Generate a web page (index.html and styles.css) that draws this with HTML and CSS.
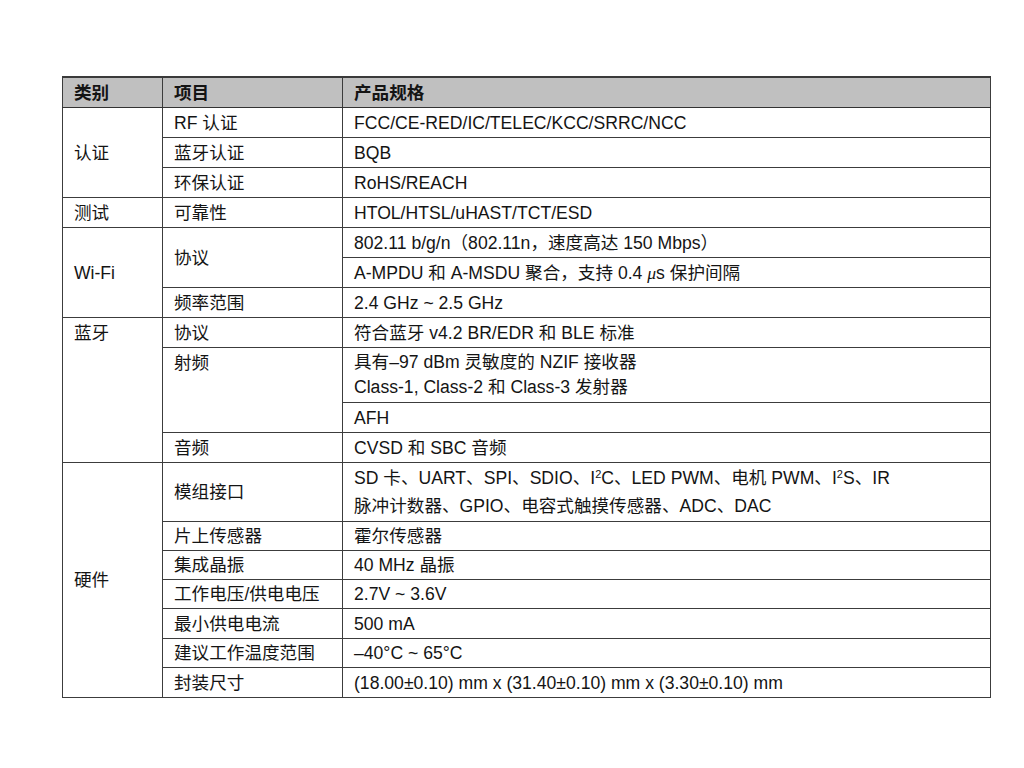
FILE: index.html
```html
<!DOCTYPE html>
<html lang="zh-CN">
<head>
<meta charset="utf-8">
<title>规格</title>
<link rel="stylesheet" href="styles.css">
</head>
<body>
<div class="page">
<table class="spec">
  <colgroup>
    <col class="c1"><col class="c2"><col class="c3">
  </colgroup>
  <thead>
    <tr class="h30"><th>类别</th><th>项目</th><th>产品规格</th></tr>
  </thead>
  <tbody>
    <tr class="h30"><td rowspan="3">认证</td><td>RF 认证</td><td>FCC/CE-RED/IC/TELEC/KCC/SRRC/NCC</td></tr>
    <tr class="h30"><td>蓝牙认证</td><td>BQB</td></tr>
    <tr class="h30"><td>环保认证</td><td>RoHS/REACH</td></tr>
    <tr class="h30 sect"><td>测试</td><td>可靠性</td><td>HTOL/HTSL/uHAST/TCT/ESD</td></tr>
    <tr class="h30 sect"><td rowspan="3">Wi-Fi</td><td rowspan="2">协议</td><td>802.11 b/g/n（802.11n，速度高达 150 Mbps）</td></tr>
    <tr class="h30"><td>A-MPDU 和 A-MSDU 聚合，支持 0.4 <i class="mu">μ</i>s 保护间隔</td></tr>
    <tr class="h30"><td>频率范围</td><td>2.4 GHz ~ 2.5 GHz</td></tr>
    <tr class="h30 sect"><td rowspan="4" class="top">蓝牙</td><td>协议</td><td>符合蓝牙 v4.2 BR/EDR 和 BLE 标准</td></tr>
    <tr class="h55"><td rowspan="2" class="top2">射频</td><td class="multi">具有–97 dBm 灵敏度的 NZIF 接收器<br>Class-1, Class-2 和 Class-3 发射器</td></tr>
    <tr class="h30"><td>AFH</td></tr>
    <tr class="h30"><td>音频</td><td>CVSD 和 SBC 音频</td></tr>
    <tr class="h59 sect"><td rowspan="7">硬件</td><td>模组接口</td><td class="multi2">SD 卡、UART、SPI、SDIO、I<sup>2</sup>C、LED PWM、电机 PWM、I<sup>2</sup>S、IR<br>脉冲计数器、GPIO、电容式触摸传感器、ADC、DAC</td></tr>
    <tr class="h29"><td>片上传感器</td><td>霍尔传感器</td></tr>
    <tr class="h29"><td>集成晶振</td><td>40 MHz 晶振</td></tr>
    <tr class="h29"><td>工作电压/供电电压</td><td>2.7V ~ 3.6V</td></tr>
    <tr class="h30"><td>最小供电电流</td><td>500 mA</td></tr>
    <tr class="h29"><td>建议工作温度范围</td><td>–40°C ~ 65°C</td></tr>
    <tr class="h30"><td>封装尺寸</td><td>(18.00±0.10) mm x (31.40±0.10) mm x (3.30±0.10) mm</td></tr>
  </tbody>
</table>
</div>
</body>
</html>
```
FILE: styles.css
```css
html, body {
  margin: 0;
  padding: 0;
  background: #ffffff;
}
.page {
  padding: 76px 0 0 62px;
}
.spec {
  border-collapse: collapse;
  width: 928px;
  table-layout: fixed;
  font-family: "Liberation Sans", "Noto Sans CJK SC", sans-serif;
  font-size: 17.6px;
  color: #141414;
  border: 1.5px solid #3a3a3a;
}
.c1 { width: 100px; }
.c2 { width: 180px; }
.c3 { width: 648px; }
.spec th, .spec td {
  border: 1px solid #3c3c3c;
  padding: 0 11px;
  text-align: left;
  vertical-align: middle;
  line-height: 22px;
  white-space: nowrap;
}
.spec th {
  background: #c0c0c0;
  font-weight: 700;
  border-bottom: 1.5px solid #333;
  border-top: 2px solid #3a3a3a;
}
.spec td:first-child {
  padding-left: 11px;
}
.h30 > * { height: 29px; }
.h29 > * { height: 28px; }
.h55 > * { height: 54px; }
.h59 > * { height: 58px; }
.sect > td { border-top: 1px solid #333; }
.spec td.top {
  vertical-align: top;
  line-height: 30px;
}
.spec td.top2 {
  vertical-align: top;
  padding-top: 3px;
  line-height: 25px;
}
.spec td.multi {
  line-height: 25px;
}
.spec td.multi2 {
  line-height: 28px;
}
.mu {
  font-family: "Liberation Serif", serif;
  font-style: italic;
}
sup {
  font-size: 11px;
  line-height: 0;
  vertical-align: 6px;
}
```
